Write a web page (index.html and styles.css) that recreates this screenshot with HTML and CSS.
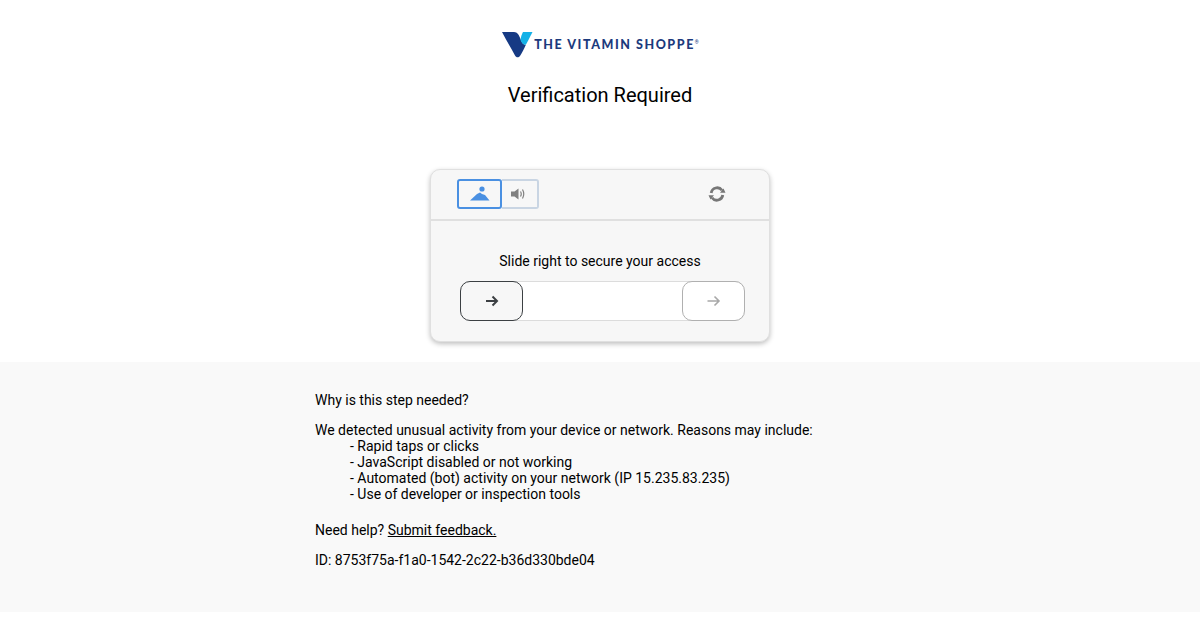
FILE: index.html
```html
<!DOCTYPE html>
<html lang="en">
<head>
    <meta charset="UTF-8">
    <title>Verification Required</title>
    <link rel="stylesheet" href="styles.css">
</head>
<body>
    <header class="top">
        <div class="logo">
            <svg class="logo-mark" width="32" height="27" viewBox="0 0 32 27">
                <path d="M1 1H13C16.500 1 18 4 19.500 8C21 12 23 14.500 25 13.500C23 18 21 22 19 25C17.500 27 15 26.500 14 24.500C10 17 5 9 1 1Z" fill="#163a84"/>
                <path d="M22 1H31.500C29 6 27 10 25 13.500C22.500 14.500 20.500 12 19.500 9C20 6 20.500 3.500 22 1Z" fill="#14b1e7"/>
            </svg>
            <span class="logo-text">THE VITAMIN SHOPPE</span><span class="logo-tm">®</span>
        </div>
        <h1>Verification Required</h1>
    </header>

    <div class="card">
        <div class="toolbar">
            <div class="tabs">
                <button class="tab active">
                    <svg width="20" height="16" viewBox="0 0 20 16">
                        <circle cx="12" cy="3" r="2.600" fill="#4a90e2"/>
                        <path d="M0 14.500L7 8L10 6.500L12 8L15 9L19.500 14.500Z" fill="#4a90e2"/>
                    </svg>
                </button>
                <button class="tab">
                    <svg width="14" height="12" viewBox="0 0 14 12">
                        <path d="M0 3.500H3.500L7.500 0.500V11.500L3.500 8.500H0Z" fill="#808080"/>
                        <path d="M9.500 3.500Q11 6 9.500 8.500M11.500 1.500Q14 6 11.500 10.500" fill="none" stroke="#808080" stroke-width="1.200"/>
                    </svg>
                </button>
            </div>
            <svg class="refresh" width="18" height="18" viewBox="0 0 18 18">
                <path d="M3.200 8A6 6 0 0 1 14 5.300" fill="none" stroke="#777" stroke-width="2.800"/>
                <path d="M14.800 10A6 6 0 0 1 4 12.700" fill="none" stroke="#777" stroke-width="2.800"/>
                <path d="M12 7.800H17.500L15.500 3.500Z" fill="#777"/>
                <path d="M6 10.200H0.500L2.500 14.500Z" fill="#777"/>
            </svg>
        </div>
        <div class="challenge">
            <p class="prompt">Slide right to secure your access</p>
            <div class="slider">
                <div class="handle start">
                    <svg width="14" height="12" viewBox="0 0 14 12">
                        <path d="M1 6H12M7.500 1.500L12 6L7.500 10.500" fill="none" stroke="#3c4043" stroke-width="2"/>
                    </svg>
                </div>
                <div class="handle end">
                    <svg width="14" height="12" viewBox="0 0 14 12">
                        <path d="M0.500 6H12M7.500 1.500L12 6L7.500 10.500" fill="none" stroke="#a8a8a8" stroke-width="1.600"/>
                    </svg>
                </div>
            </div>
        </div>
    </div>

    <section class="info">
        <div class="info-inner">
            <p>Why is this step needed?</p>
            <p>We detected unusual activity from your device or network. Reasons may include:</p>
            <ul>
                <li>- Rapid taps or clicks</li>
                <li>- JavaScript disabled or not working</li>
                <li>- Automated (bot) activity on your network (IP 15.235.83.235)</li>
                <li>- Use of developer or inspection tools</li>
            </ul>
            <p class="help">Need help? <a href="#">Submit feedback.</a></p>
            <p>ID: 8753f75a-f1a0-1542-2c22-b36d330bde04</p>
        </div>
    </section>
</body>
</html>
```

FILE: styles.css
```css
body { margin: 0; background-color: #fff; color: #000; font-family: Roboto, "Liberation Sans", sans-serif; font-size: 14px; line-height: 16px; }
.top { padding-top: 31px; text-align: center; }
.logo { display: flex; justify-content: center; align-items: center; height: 27px; }
.logo-mark { margin-right: 1px; }
.logo-text { margin-top: 1px; color: #1c3a7d; font-family: Lato, sans-serif; font-size: 12.500px; font-weight: 900; letter-spacing: 1.550px; white-space: nowrap; }
.logo-tm { margin-top: -5px; color: #1c3a7d; font-size: 5px; }
h1 { margin: 25px 0 0; font-size: 20px; font-weight: 400; line-height: 24px; }
.card { box-sizing: border-box; width: 340px; height: 173px; margin: 62px auto 0; background-color: #f7f7f7; border: 1px solid #e0e0e0; border-radius: 10px; box-shadow: 0 2px 5px rgba(0, 0, 0, 0.25); }
.toolbar { box-sizing: border-box; display: flex; justify-content: space-between; align-items: center; height: 51px; padding: 0 43px 2px 26px; border-bottom: 2px solid #e0e0e0; }
.tabs { display: flex; }
.tab { display: flex; justify-content: center; align-items: center; box-sizing: border-box; width: 37px; height: 30px; padding: 0 4px 0 0; background: none; border: 2px solid #c9d5e3; border-left: none; border-radius: 0 3px 3px 0; }
.tab.active { width: 45px; padding: 0; border: 2px solid #4a90e2; border-radius: 3px; }
.challenge { padding-top: 32px; }
.prompt { margin: 0; text-align: center; }
.slider { box-sizing: border-box; display: flex; justify-content: space-between; width: 285px; height: 40px; margin: 12px 0 0 29px; background-color: #fff; border-top: 1px solid #dcdcdc; border-bottom: 1px solid #dcdcdc; border-radius: 10px; }
.handle { box-sizing: border-box; display: flex; justify-content: center; align-items: center; width: 63px; height: 40px; margin-top: -1px; border-radius: 10px; }
.handle.start { background-color: #f7f7f7; border: 1px solid #3c4043; }
.handle.end { background-color: #fff; border: 1px solid #b0b0b0; }
.info { box-sizing: border-box; height: 250px; margin-top: 20px; padding: 30px 0 0 315px; background-color: #f9f9f9; }
.info p { margin: 0 0 14px; }
.info ul { margin: -14px 0 20px; padding: 0 0 0 35px; list-style: none; }
.info a { color: #000; }
```
